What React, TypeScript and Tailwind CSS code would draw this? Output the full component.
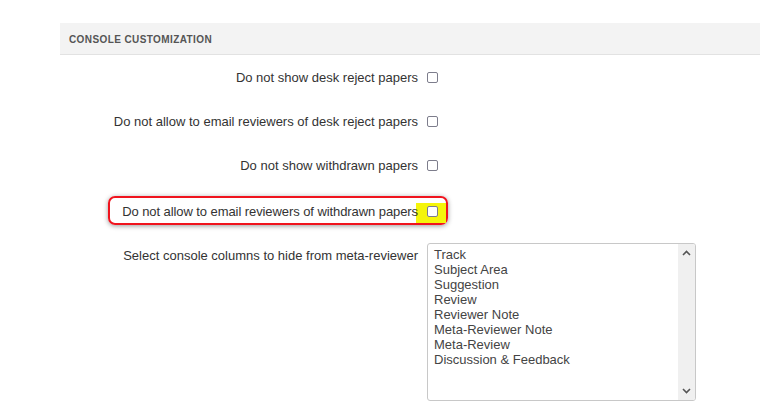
const options = [
  "Track",
  "Subject Area",
  "Suggestion",
  "Review",
  "Reviewer Note",
  "Meta-Reviewer Note",
  "Meta-Review",
  "Discussion & Feedback",
];

const Checkbox = () => (
  <span className="inline-block w-[11px] h-[11px] border border-[#7d7d8c] rounded-[2px] bg-white" />
);

const Row = ({ label, highlight }: { label: string; highlight?: boolean }) => (
  <div className={`relative flex items-center ${highlight ? "h-[48px]" : "h-[44px]"}`}>
    {highlight && (
      <>
        <div className="absolute left-[48px] top-[9px] w-[340px] h-[29px] border-2 border-[#f0141e] rounded-[7px] shadow-[0_1px_5px_rgba(0,0,0,0.4)]" />
        <div className="absolute left-[356px] top-[16px] w-[30px] h-[20px] bg-[#f5f50a]" />
      </>
    )}
    <div className={`relative w-[358px] text-right leading-[15px] ${highlight ? "tracking-[-0.08px]" : ""}`}>{label}</div>
    <div className="relative ml-[9px] flex items-center">
      <Checkbox />
    </div>
  </div>
);

const App: React.FC = () => {
  return (
    <div
      className="w-[760px] h-[416px] bg-white text-[13px] text-[#333] overflow-hidden"
      style={{ fontFamily: '"Liberation Sans", Arial, sans-serif' }}
    >
      <div className="pt-[23px] pl-[60px]">
        <div className="h-[32px] bg-[#f3f3f3] border-b border-[#e2e2e2] flex items-center pl-[9px] pt-[1px]">
          <span className="text-[10px] font-bold text-[#555] tracking-[0.4px]">CONSOLE CUSTOMIZATION</span>
        </div>

        <Row label="Do not show desk reject papers" />
        <Row label="Do not allow to email reviewers of desk reject papers" />
        <Row label="Do not show withdrawn papers" />
        <Row label="Do not allow to email reviewers of withdrawn papers" highlight />

        <div className="flex pt-[8px]">
          <div className="w-[358px] text-right leading-[15px] pt-[5px]">
            Select console columns to hide from meta-reviewer
          </div>
          <div className="ml-[9px] w-[269px] h-[158px] border border-[#c8c8c8] rounded-[3px] flex overflow-hidden">
            <div className="flex-1 pl-[6px] pt-[3px] leading-[15px] text-[#444]">
              {options.map((o) => (
                <div key={o}>{o}</div>
              ))}
            </div>
            <div className="w-[17px] bg-[#f0f0f0] flex flex-col justify-between items-center py-[6px]">
              <svg width="9" height="6" viewBox="0 0 9 6">
                <path d="M1 5 L4.5 1.5 L8 5" fill="none" stroke="#555" strokeWidth="1.6" />
              </svg>
              <svg width="9" height="6" viewBox="0 0 9 6">
                <path d="M1 1 L4.5 4.5 L8 1" fill="none" stroke="#555" strokeWidth="1.6" />
              </svg>
            </div>
          </div>
        </div>
      </div>
    </div>
  );
};

export default App;
